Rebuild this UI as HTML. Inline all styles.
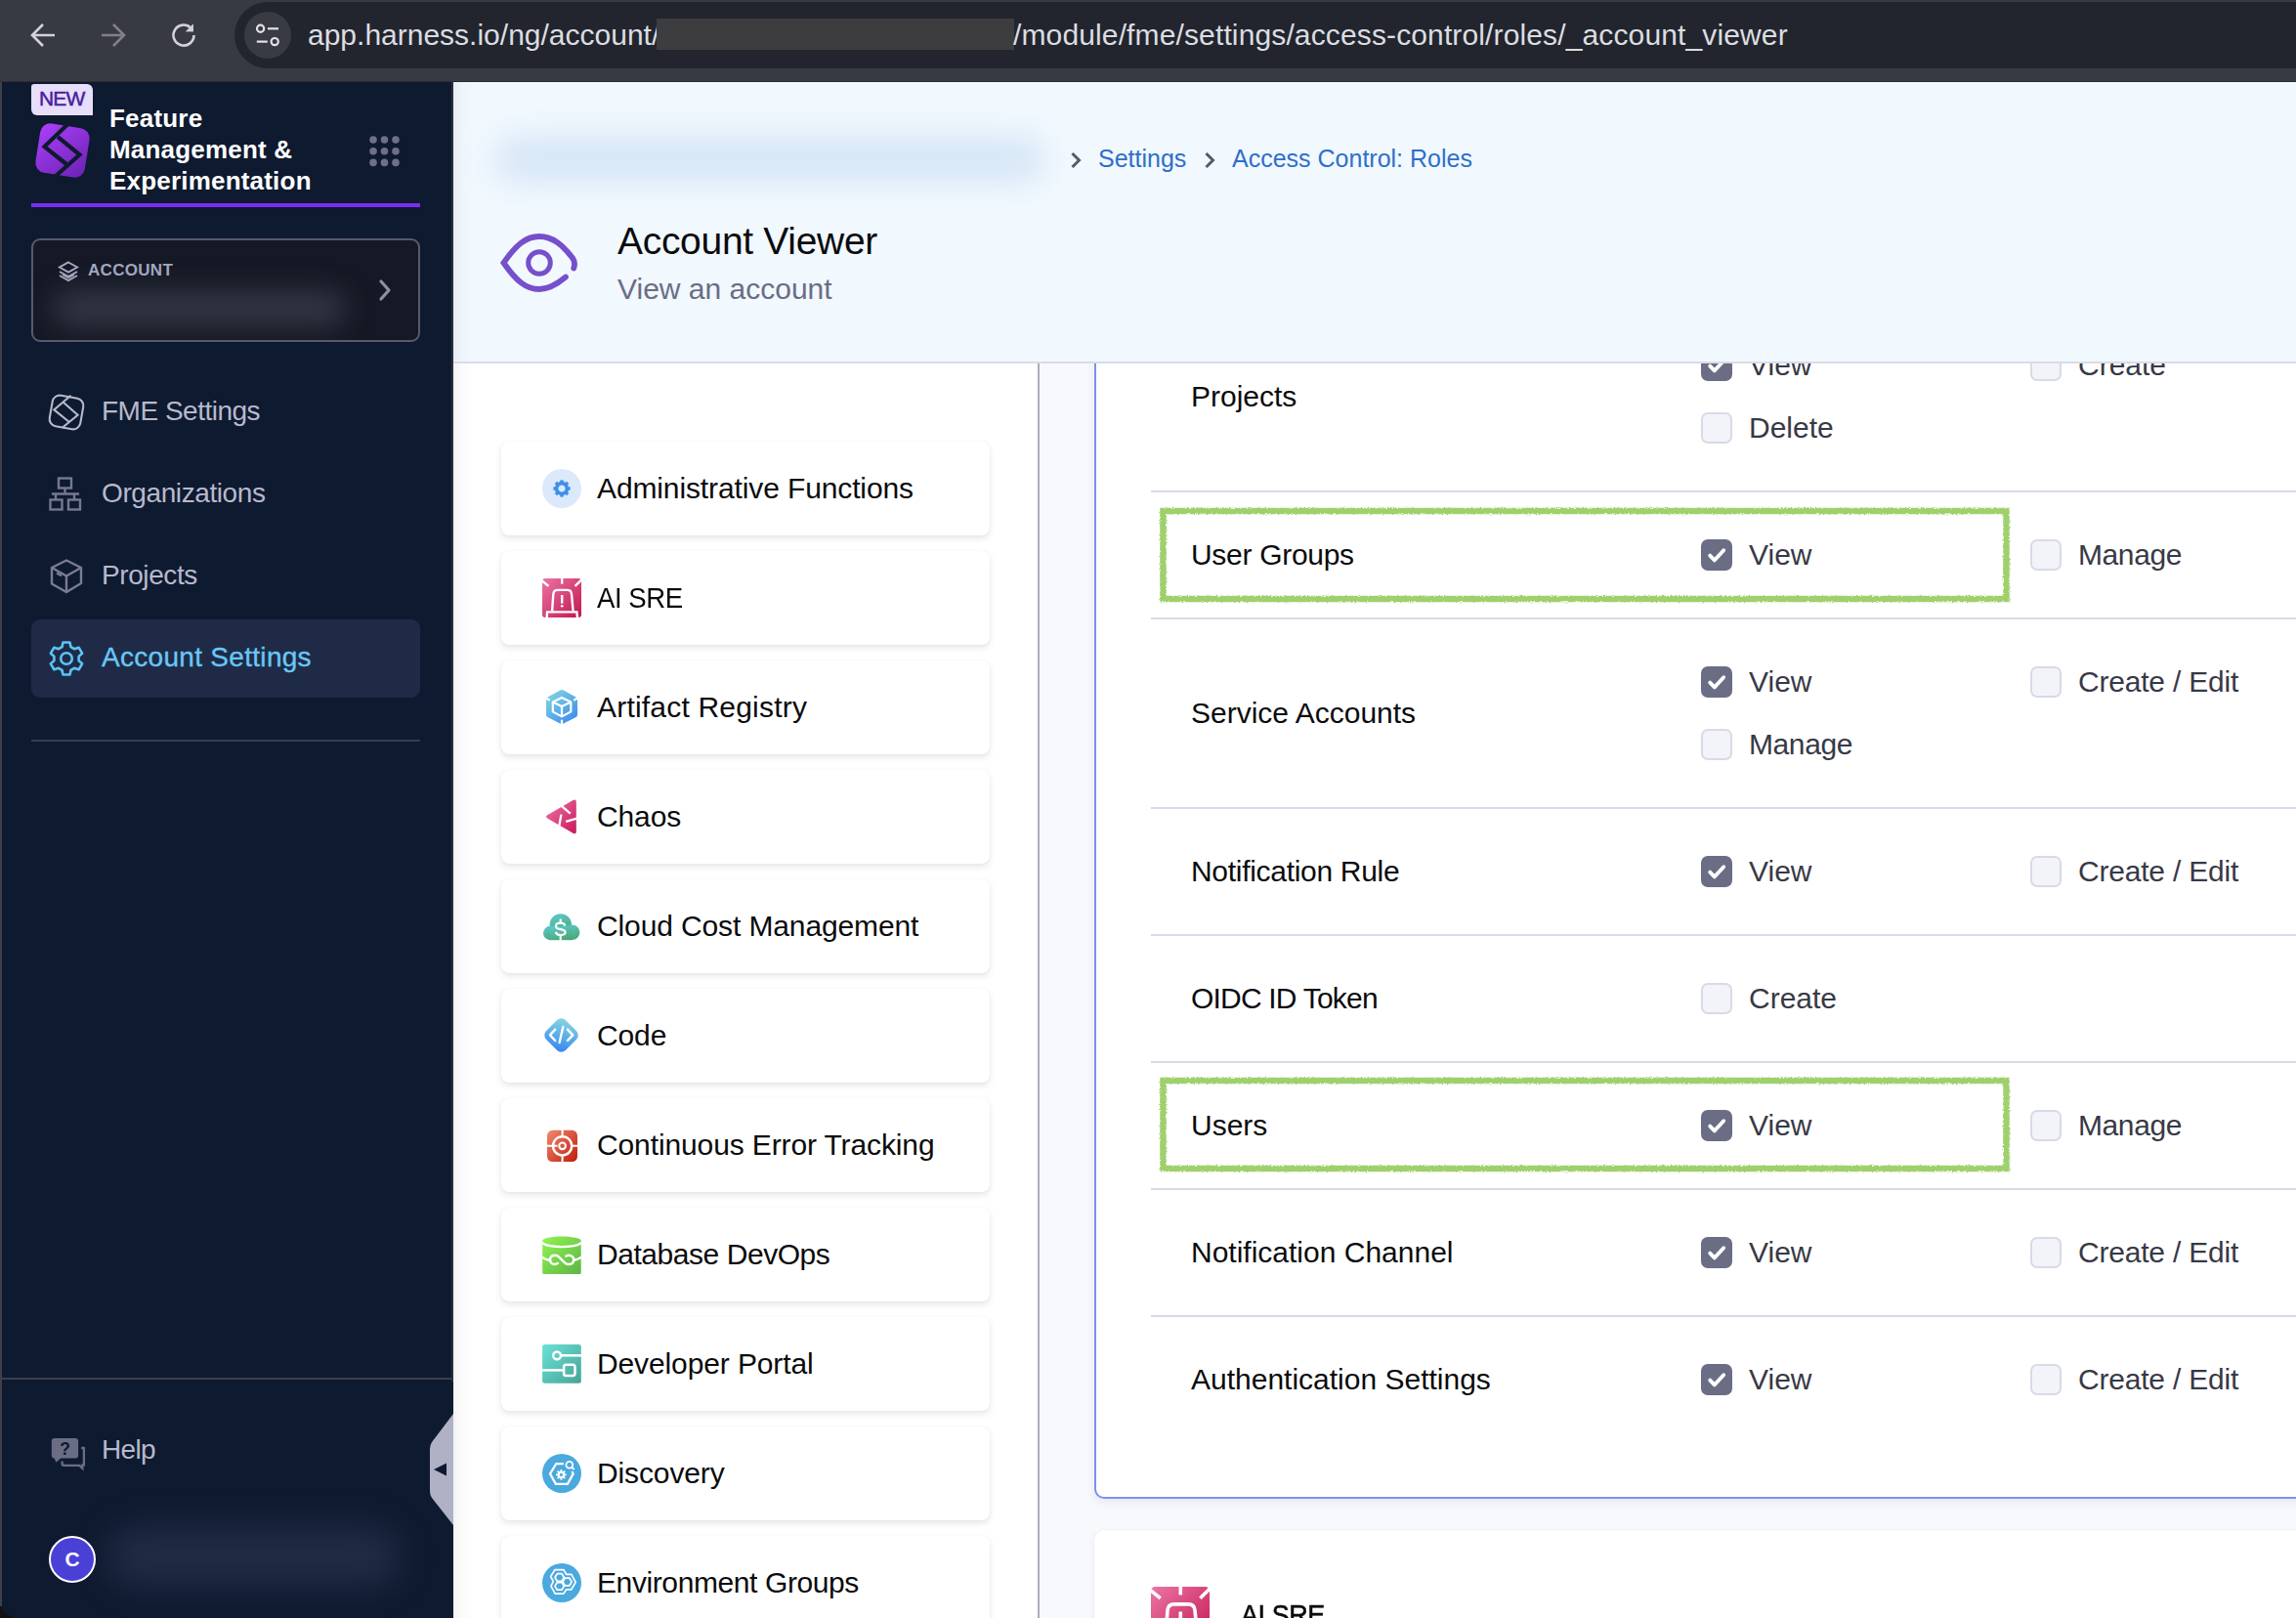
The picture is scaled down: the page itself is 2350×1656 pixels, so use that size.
<!DOCTYPE html>
<html><head><meta charset="utf-8">
<style>
*{box-sizing:border-box;margin:0;padding:0}
html,body{width:2350px;height:1656px;overflow:hidden;background:#f8f9fd;font-family:"Liberation Sans",sans-serif}
.a{position:absolute}
.t{position:absolute;white-space:nowrap;line-height:40px;height:40px}
#bar{left:0;top:0;width:2350px;height:84px;background:#383a43;border-bottom:1px solid #2b2c31}
#omni{left:240px;top:2px;width:2200px;height:68px;border-radius:34px;background:#22252e}
#site{left:250px;top:12px;width:48px;height:48px;border-radius:50%;background:#393b44}
#side{left:0;top:84px;width:464px;height:1572px;background:#0e1a2f;border-bottom-left-radius:18px;overflow:hidden}
#hdr{left:464px;top:84px;width:1886px;height:288px;background:#f1f8fe;border-bottom:2px solid #d9dbe8}
#lp{left:464px;top:372px;width:598px;height:1284px;background:#fff}
#div1{left:1062px;top:372px;width:2px;height:1284px;background:#abacba}
.card{position:absolute;left:513px;width:500px;height:96px;background:#fff;border-radius:8px;box-shadow:0 0 1px rgba(40,41,61,.10),0 3px 6px rgba(96,97,112,.16)}
.ct{position:absolute;left:98px;top:28px;font-size:30px;line-height:40px;color:#0b0b0d;white-space:nowrap;letter-spacing:-0.12px}
.ci{position:absolute;left:42px;top:28px;width:40px;height:40px}
#rc{left:1120px;top:300px;width:1300px;height:1234px;background:#fff;border:2px solid #7d90f2;border-radius:10px;box-shadow:0 4px 10px rgba(96,97,112,.10)}
.sep{position:absolute;left:1178px;width:1200px;height:2px;background:#d9dae6}
.lbl{position:absolute;left:1219px;font-size:30px;line-height:40px;height:40px;color:#0b0b0d;white-space:nowrap}
.cb{position:absolute;width:32px;height:32px;border-radius:7px}
.cb.on{background:#6b6d85}
.cb.off{background:#f3f3fa;border:2px solid #d9dae6}
.opt{position:absolute;font-size:30px;line-height:40px;height:40px;color:#383946;white-space:nowrap}
.green{position:absolute;border:6px solid #9fd36b}
</style></head><body>
<!-- browser bar -->
<div id="bar" class="a"></div>
<div id="omni" class="a"></div>
<div id="site" class="a"></div>
<svg class="a" style="left:30px;top:22px" width="28" height="28" viewBox="0 0 28 28" fill="none" stroke="#d2d3d9" stroke-width="2.6"><path d="M26 14H4M14 3L3 14l11 11"/></svg>
<svg class="a" style="left:102px;top:22px" width="28" height="28" viewBox="0 0 28 28" fill="none" stroke="#808187" stroke-width="2.6"><path d="M2 14h22M14 3l11 11-11 11"/></svg>
<svg class="a" style="left:174px;top:22px" width="28" height="28" viewBox="0 0 28 28" fill="none" stroke="#d2d3d9" stroke-width="2.6"><path d="M24.5 14A10.5 10.5 0 1 1 21.4 6.6"/><path d="M23.8 2.5v7.8h-7.8" fill="#cfd0d6" stroke="none"/><path d="M16.2 10.3h7.6V2.7z" fill="#cfd0d6" stroke="none"/></svg>
<svg class="a" style="left:256px;top:18px" width="36" height="36" viewBox="0 0 36 36" fill="none" stroke="#e3e3e6" stroke-width="2.2">
  <circle cx="10.6" cy="11.3" r="3.6"/><path d="M18 11.3h11"/>
  <circle cx="25.2" cy="24.6" r="3.6"/><path d="M6.8 24.6h11"/>
</svg>
<div class="t" style="left:315px;top:16px;font-size:30px;color:#dcdde0">app.harness.io/ng/account/</div>
<div class="a" style="left:672px;top:19px;width:366px;height:32px;background:#3d3d3f"></div>
<div class="t" style="left:1037px;top:16px;font-size:30px;color:#dcdde0;letter-spacing:0.13px">/module/fme/settings/access-control/roles/_account_viewer</div>

<!-- sidebar -->
<div class="a" style="left:0;top:1600px;width:40px;height:56px;background:#121212"></div>
<div id="side" class="a"></div>
<!-- sidebar content -->
<div class="a" style="left:0;top:84px;width:2px;height:1560px;background:#3d4049"></div>
<div class="a" style="left:32px;top:86px;width:63px;height:32px;background:#e6defb;border-radius:3px 6px 0 6px"></div>
<div class="t" style="left:40px;top:81px;font-size:21px;color:#4a1f9e;letter-spacing:-0.8px;-webkit-text-stroke:0.5px #4a1f9e">NEW</div>
<svg class="a" style="left:28px;top:118px" width="72" height="72" viewBox="0 0 72 72">
  <defs><linearGradient id="lg1" x1="0" y1="0" x2="1" y2="1"><stop offset="0" stop-color="#ab40fb"/><stop offset="1" stop-color="#6a22b3"/></linearGradient></defs>
  <rect x="10.5" y="10.5" width="51" height="51" rx="10.5" fill="url(#lg1)" transform="rotate(9 36 36)"/>
  <polyline points="42,8.5 17.5,32.1 40,50" fill="none" stroke="#0e1a2f" stroke-width="4.2" stroke-linejoin="miter"/>
  <polyline points="31.2,22.2 53.5,40.4 28,63" fill="none" stroke="#0e1a2f" stroke-width="4.2" stroke-linejoin="miter"/>
</svg>
<div class="t" style="left:112px;top:101px;font-size:26px;font-weight:700;color:#fff;letter-spacing:0.2px">Feature</div>
<div class="t" style="left:112px;top:133px;font-size:26px;font-weight:700;color:#fff;letter-spacing:0.2px">Management &amp;</div>
<div class="t" style="left:112px;top:165px;font-size:26px;font-weight:700;color:#fff;letter-spacing:0.2px">Experimentation</div>
<svg class="a" style="left:376px;top:137px" width="36" height="36" viewBox="0 0 36 36" fill="#6e7088">
  <circle cx="6" cy="6" r="3.8"/><circle cx="17.5" cy="6" r="3.8"/><circle cx="29" cy="6" r="3.8"/>
  <circle cx="6" cy="17.7" r="3.8"/><circle cx="17.5" cy="17.7" r="3.8"/><circle cx="29" cy="17.7" r="3.8"/>
  <circle cx="6" cy="29.4" r="3.8"/><circle cx="17.5" cy="29.4" r="3.8"/><circle cx="29" cy="29.4" r="3.8"/>
</svg>
<div class="a" style="left:32px;top:208px;width:398px;height:4px;background:#7a2df2"></div>

<!-- account box -->
<div class="a" style="left:32px;top:244px;width:398px;height:106px;background:#151925;border:2px solid #575a6b;border-radius:9px;overflow:hidden">
  <div class="a" style="left:20px;top:52px;width:300px;height:36px;background:#3a3c49;border-radius:18px;filter:blur(14px);opacity:.85"></div>
</div>
<svg class="a" style="left:58px;top:266px" width="24" height="24" viewBox="0 0 24 24" fill="none" stroke="#a3a6be" stroke-width="2">
  <path d="M12 2.5l9 5-9 5-9-5z" fill="none"/><path d="M3 12l9 5 9-5" /><path d="M3 16l9 5 9-5"/>
  <path d="M6 13.7l6 3.3 6-3.3v2.3l-6 3.3-6-3.3z" fill="#a3a6be" stroke="none"/>
</svg>
<div class="t" style="left:90px;top:257px;font-size:17px;font-weight:700;color:#a3a6be;letter-spacing:0.3px">ACCOUNT</div>
<svg class="a" style="left:384px;top:284px" width="20" height="26" viewBox="0 0 20 26"><path d="M6 4l8 9-8 9" fill="none" stroke="#8d8fa6" stroke-width="3.2" stroke-linecap="round" stroke-linejoin="round"/></svg>

<!-- nav -->
<svg class="a" style="left:44px;top:398px" width="48" height="48" viewBox="0 0 48 48" fill="none" stroke="#b8b9cc" stroke-width="2.1">
  <rect x="8" y="8" width="32" height="32" rx="7.5" transform="rotate(10 24 24)"/>
  <polyline points="28.5,6.7 11.3,21.4 27,34" stroke-linejoin="miter"/>
  <polyline points="20.8,13.7 35.6,26.7 19.5,40" stroke-linejoin="miter"/>
</svg>
<div class="t" style="left:104px;top:401px;font-size:28px;color:#b7b9cd;letter-spacing:-0.5px">FME Settings</div>
<svg class="a" style="left:48px;top:486px" width="40" height="40" viewBox="0 0 40 40" fill="none" stroke="#767890" stroke-width="2.4">
  <rect x="12" y="3.5" width="13" height="10"/><path d="M18.5 13.5v6M5 19.5h28M9 19.5v6M28 19.5v6"/>
  <rect x="3.5" y="25.5" width="12" height="10"/><rect x="22" y="25.5" width="12" height="10"/>
</svg>
<div class="t" style="left:104px;top:485px;font-size:28px;color:#b7b9cd;letter-spacing:-0.4px">Organizations</div>
<svg class="a" style="left:50px;top:571px" width="38" height="38" viewBox="0 0 38 38" fill="none" stroke="#7a7c92" stroke-width="2.4" stroke-linejoin="round">
  <path d="M18 2.5l15 7.5v16l-15 9-15-8.5v-16.5z"/><path d="M3 10l15 8.5 15-8.5M18 18.5v17"/><path d="M8 15.5l5 2.8"/>
</svg>
<div class="t" style="left:104px;top:569px;font-size:28px;color:#b7b9cd;letter-spacing:-0.4px">Projects</div>
<div class="a" style="left:32px;top:634px;width:398px;height:80px;background:#1f2b46;border-radius:9px"></div>
<svg class="a" style="left:48px;top:654px" width="40" height="40" viewBox="0 0 40 40">
  <g fill="none" stroke="#5ec3f7" stroke-width="2.6" stroke-linejoin="round">
  <path d="M16.5 3.5h7l1 4.6 3.6 2.1 4.5-1.5 3.5 6-3.5 3.2v4.2l3.5 3.2-3.5 6-4.5-1.5-3.6 2.1-1 4.6h-7l-1-4.6-3.6-2.1-4.5 1.5-3.5-6 3.5-3.2v-4.2l-3.5-3.2 3.5-6 4.5 1.5 3.6-2.1z"/>
  <circle cx="20" cy="20" r="5.8"/></g>
</svg>
<div class="t" style="left:104px;top:653px;font-size:28px;color:#69c7f6;letter-spacing:0.3px;-webkit-text-stroke:0.35px #69c7f6">Account Settings</div>
<div class="a" style="left:32px;top:757px;width:398px;height:2px;background:#383c4e"></div>

<!-- bottom -->
<div class="a" style="left:2px;top:1410px;width:461px;height:2px;background:#3b3f4e"></div>
<svg class="a" style="left:46px;top:1464px" width="50" height="46" viewBox="0 0 50 46">
  <path d="M9.8,8 H31.1 Q34.1,8 34.1,11 V25.4 Q34.1,28.4 31.1,28.4 H16.2 L11.4,32.7 L9.6,28.4 Q6.8,28.2 6.8,25.4 V11 Q6.8,8 9.8,8 Z" fill="#6b6d85"/>
  <path d="M37.2,18 H39.9 V35.4 H38.4 V38.8 L35.4,35.9 H19.6 Q17.6,35.9 17.6,34 V31.4" fill="none" stroke="#6b6d85" stroke-width="2.3"/>
  <text x="20.6" y="24.6" font-family="Liberation Sans" font-weight="700" font-size="17.5" fill="#0e1a2f" text-anchor="middle">?</text>
</svg>
<div class="t" style="left:104px;top:1464px;font-size:28px;color:#b7b9cd;letter-spacing:-0.7px">Help</div>
<div class="a" style="left:110px;top:1562px;width:300px;height:62px;background:#243049;border-radius:31px;filter:blur(16px);opacity:.8"></div>
<div class="a" style="left:50px;top:1572px;width:48px;height:48px;border-radius:50%;background:#4b40d6;border:2.5px solid #fff"></div>
<div class="t" style="left:50px;top:1576px;width:48px;text-align:center;font-size:21px;font-weight:700;color:#fff">C</div>
<svg class="a" style="left:438px;top:1446px" width="26" height="116" viewBox="0 0 26 116">
  <path d="M26,1 L4,30 Q2,33 2,37 V80 Q2,84 4,87 L26,115 Z" fill="#b0b1c5"/>
  <path d="M6,58 L19,51.5 V64.5 Z" fill="#0e1a2f"/>
</svg>


<!-- left panel -->
<div id="lp" class="a"></div>
<div id="div1" class="a"></div>
<div class="a" style="left:464px;top:84px;width:22px;height:1572px;background:linear-gradient(to right,rgba(30,30,50,.06),rgba(30,30,50,.02) 40%,rgba(30,30,50,0))"></div>
<div class="a" style="left:462px;top:84px;width:2px;height:1330px;background:#2c2e37"></div>
<div class="card" style="top:452px"><svg class="ci" viewBox="0 0 40 40"><circle cx="20" cy="20" r="20" fill="#dbe9fa"/>
<g fill="#3f8fe9" transform="translate(20 20)">
<circle r="5.4" fill="none" stroke="#3f8fe9" stroke-width="3.6"/>
<rect x="-1.7" y="-8.6" width="3.4" height="3.6"/><rect x="-1.7" y="-8.6" width="3.4" height="3.6" transform="rotate(45)"/>
<rect x="-1.7" y="-8.6" width="3.4" height="3.6" transform="rotate(90)"/><rect x="-1.7" y="-8.6" width="3.4" height="3.6" transform="rotate(135)"/>
<rect x="-1.7" y="-8.6" width="3.4" height="3.6" transform="rotate(180)"/><rect x="-1.7" y="-8.6" width="3.4" height="3.6" transform="rotate(225)"/>
<rect x="-1.7" y="-8.6" width="3.4" height="3.6" transform="rotate(270)"/><rect x="-1.7" y="-8.6" width="3.4" height="3.6" transform="rotate(315)"/>
</g></svg><div class="ct">Administrative Functions</div></div>
<div class="card" style="top:564px"><svg class="ci" viewBox="0 0 40 40"><defs><linearGradient id="gsre1" x1="0" y1="0" x2="1" y2="1"><stop offset="0" stop-color="#ec74a6"/><stop offset="1" stop-color="#c2174f"/></linearGradient></defs>
<rect x="0" y="0" width="40" height="40" rx="3" fill="url(#gsre1)"/>
<g fill="none" stroke="#fff" stroke-width="2.4">
<path d="M10.1,33.5 L11.3,16 Q11.7,11.9 15.8,11.9 H25.6 Q29.6,11.9 30,16 L31.6,33.5"/>
<path d="M4.6,40.5 L5.1,34.4 H35.4 L36,40.5"/>
<path d="M20.2,17 V25.6"/><path d="M20.2,0 V5.6"/><path d="M-0.5,2.2 L6.5,7.9"/><path d="M40.5,1 L33.6,7.8"/>
</g><circle cx="20.2" cy="28.2" r="1.3" fill="#fff"/></svg><div class="ct" style="letter-spacing:-0.5px;transform:scaleX(0.92);transform-origin:0 50%">AI SRE</div></div>
<div class="card" style="top:676px"><svg class="ci" viewBox="0 0 40 40"><defs><linearGradient id="gar" x1="0.1" y1="0" x2="0.9" y2="1"><stop offset="0" stop-color="#84d8e0"/><stop offset="1" stop-color="#3a88f0"/></linearGradient></defs>
<path d="M18.2,2.5 Q20,1.6 21.8,2.5 L34.5,9.4 Q36,10.2 36,12 V27.6 Q36,29.3 34.5,30.1 L21.8,36.5 Q20,37.4 18.2,36.5 L5.5,30.1 Q4,29.3 4,27.6 V12 Q4,10.2 5.5,9.4 Z" fill="url(#gar)"/>
<g fill="none" stroke="#fff" stroke-width="2.2" stroke-linejoin="round">
<path d="M20,9.9 L29.3,14.5 V24.4 L20,29.4 L10.8,24.4 V14.5 Z"/><path d="M10.8,14.5 L20,19 L29.3,14.5 M20,19 V29.4"/>
<path d="M3,10 L7.8,12.8 M32.2,12.8 L37,10 M20,32.8 V38"/></g></svg><div class="ct" style="letter-spacing:0.2px">Artifact Registry</div></div>
<div class="card" style="top:788px"><svg class="ci" viewBox="0 0 40 40"><defs><linearGradient id="gch" x1="0" y1="0" x2="1" y2="1"><stop offset="0" stop-color="#ee74a8"/><stop offset="1" stop-color="#c8195a"/></linearGradient></defs>
<path d="M31.5,3 Q34.8,1.5 34.8,5 V35 Q34.8,38.5 31.5,36.8 L5.2,21.5 Q2.6,19.8 5.2,18.3 Z" fill="url(#gch)"/>
<g fill="none" stroke="#fff" stroke-width="2.3"><path d="M19.7,8.8 L28.7,16.6"/><path d="M19.4,17.6 L17.3,29.5"/><path d="M24.2,24.8 L35.5,21.6"/></g></svg><div class="ct">Chaos</div></div>
<div class="card" style="top:900px"><svg class="ci" viewBox="0 0 40 40"><defs><linearGradient id="gcc" x1="0.3" y1="0" x2="0.7" y2="1"><stop offset="0" stop-color="#5ac8c8"/><stop offset="1" stop-color="#4aa774"/></linearGradient></defs>
<g fill="url(#gcc)"><circle cx="18.8" cy="18.5" r="11.2"/><circle cx="8.2" cy="27" r="7.2"/><circle cx="30.6" cy="26.2" r="7.8"/><rect x="8.2" y="20" width="22.4" height="14.2"/></g>
<g fill="none" stroke="#fff" stroke-width="2.2"><path d="M23.6,19.6 C22.5,17.5 20.5,16.7 18.7,16.7 C16,16.7 14,18 14,20 C14,22.5 17,22.8 19,23.2 C21.5,23.7 23.6,24.5 23.6,26.3 C23.6,28 21.5,29 18.7,29 C16,29 14.3,27.8 13.6,26"/><path d="M18.7,12.5 V16.7 M18.7,29 V34.5"/></g></svg><div class="ct">Cloud Cost Management</div></div>
<div class="card" style="top:1012px"><svg class="ci" viewBox="0 0 40 40"><defs><linearGradient id="gcd" x1="0.2" y1="0" x2="0.8" y2="1"><stop offset="0" stop-color="#84d6e4"/><stop offset="1" stop-color="#3a88f0"/></linearGradient></defs>
<rect x="5.4" y="5.4" width="28.2" height="28.2" rx="6.5" fill="url(#gcd)" transform="rotate(45 19.5 19.5)"/>
<g fill="none" stroke="#fff" stroke-width="2.4" stroke-linecap="round" stroke-linejoin="round"><path d="M13.2,13.6 L8,19.4 L13.2,25"/><path d="M25.9,13.6 L31.3,19.4 L25.9,25"/><path d="M21.3,10.9 L17.6,27"/></g></svg><div class="ct">Code</div></div>
<div class="card" style="top:1124px"><svg class="ci" viewBox="0 0 40 40"><defs><linearGradient id="gce" x1="0" y1="0" x2="1" y2="1"><stop offset="0" stop-color="#f08a70"/><stop offset="1" stop-color="#bf1d0c"/></linearGradient></defs>
<rect x="5" y="4.8" width="31" height="32.2" rx="5.5" fill="url(#gce)"/>
<g fill="none" stroke="#fff"><circle cx="20.6" cy="20.8" r="9.6" stroke-width="2.4"/><circle cx="20.6" cy="20.8" r="3.3" stroke-width="2.1"/>
<path d="M20.6,3.5 V11 M20.6,30.6 V38.5 M4,20.8 H11 M30.2,20.8 H37 M10,20.8 H15.5" stroke-width="2"/></g></svg><div class="ct">Continuous Error Tracking</div></div>
<div class="card" style="top:1236px"><svg class="ci" viewBox="0 0 40 40"><defs><linearGradient id="gdb" x1="0" y1="0" x2="1" y2="1"><stop offset="0" stop-color="#90f452"/><stop offset="1" stop-color="#5db545"/></linearGradient></defs>
<path d="M0.2,6 C0.2,0 39.7,0 39.7,6 V38.5 Q39.7,40 38,40 H2 Q0.2,40 0.2,38.5 Z" fill="url(#gdb)"/>
<g fill="none" stroke="#fff" stroke-width="2.4"><path d="M0,8 C6,13.5 33.5,13.5 40,8"/>
<path d="M0,22.8 C3,24.5 5.5,26 8,25.8"/><path d="M32.2,25.8 C35,26 37,24.5 40,22.8"/>
<path d="M16.6,28.3 C14,31.2 8.3,30.5 8,25.5 C7.8,20.8 13.8,19.3 17,22.3 L23,28.3 C25.6,31 31.7,30.6 32.2,25.8 C32.6,21 26.6,19.4 23.6,22.3"/></g></svg><div class="ct" style="letter-spacing:-0.45px">Database DevOps</div></div>
<div class="card" style="top:1348px"><svg class="ci" viewBox="0 0 40 40"><defs><linearGradient id="gdp" x1="0" y1="0" x2="1" y2="1"><stop offset="0" stop-color="#6ae2d8"/><stop offset="1" stop-color="#48a394"/></linearGradient></defs>
<rect x="0.1" y="0" width="39.7" height="39.7" rx="2.5" fill="url(#gdp)"/>
<g fill="none" stroke="#fff" stroke-width="2.5"><circle cx="15.1" cy="11.3" r="3.9"/><path d="M19,11.3 H40"/><rect x="22.1" y="20.7" width="11.4" height="11.4" rx="2.3"/><path d="M0,26.4 H22.1"/></g></svg><div class="ct">Developer Portal</div></div>
<div class="card" style="top:1460px"><svg class="ci" viewBox="0 0 40 40"><circle cx="20" cy="20" r="20" fill="#4aa9df"/>
<g fill="none" stroke="#fff" stroke-width="2.2" stroke-linejoin="round"><path d="M21.9,10.2 H14.2 L8,20.4 L13.9,30.9 H25.9 L31.7,20.4 L30.4,18"/>
<circle cx="27.8" cy="11.2" r="3.4" stroke-width="1.8"/><path d="M30.3,13.7 L32.6,16" stroke-width="1.8"/>
<circle cx="19.4" cy="21.4" r="2.7" stroke-width="2.2"/></g>
<g stroke="#fff" stroke-width="1.7" transform="translate(19.4 21.4)"><path d="M0,-5.4 V-3 M0,5.4 V3 M-5.4,0 H-3 M5.4,0 H3 M3.8,-3.8 L2.1,-2.1 M-3.8,3.8 L-2.1,2.1 M3.8,3.8 L2.1,2.1 M-3.8,-3.8 L-2.1,-2.1"/></g></svg><div class="ct">Discovery</div></div>
<div class="card" style="top:1572px"><svg class="ci" viewBox="0 0 40 40"><circle cx="20" cy="20" r="20" fill="#4aa9df"/>
<g fill="none" stroke="#fff" stroke-width="1.7" stroke-linejoin="round">
<path d="M12.9,6.7 H21.9 L24.7,11.3 H29.9 L34.2,19.4 L29.9,26.8 H24.7 L21.9,31.1 H13.2 L8.9,23.4 L11.4,18.7 L8.6,13.5 Z"/>
<path d="M15.3,10.7 H20 L22.3,14.5 L20,18.3 H15.3 L13,14.5 Z"/>
<path d="M15.3,19.6 H20 L22.3,23.4 L20,27.2 H15.3 L13,23.4 Z"/>
<path d="M23.2,15.2 H27.9 L30.2,19 L27.9,22.8 H23.2 L20.9,19 Z"/>
</g></svg><div class="ct" style="letter-spacing:-0.4px">Environment Groups</div></div>

<!-- right card -->
<div id="rc" class="a"></div>
<div class="a" style="left:1120px;top:1566px;width:1300px;height:200px;background:#fff;border-radius:10px;box-shadow:0 0 2px rgba(40,41,61,.06),0 2px 6px rgba(96,97,112,.08)"></div>
<svg class="a" style="left:1178px;top:1624px" width="60" height="60" viewBox="0 0 40 40"><defs><linearGradient id="gsre2" x1="0" y1="0" x2="1" y2="1"><stop offset="0" stop-color="#ec74a6"/><stop offset="1" stop-color="#c2174f"/></linearGradient></defs>
<rect x="0" y="0" width="40" height="40" rx="3" fill="url(#gsre2)"/>
<g fill="none" stroke="#fff" stroke-width="2.4">
<path d="M10.1,33.5 L11.3,16 Q11.7,11.9 15.8,11.9 H25.6 Q29.6,11.9 30,16 L31.6,33.5"/>
<path d="M4.6,40.5 L5.1,34.4 H35.4 L36,40.5"/>
<path d="M20.2,17 V25.6"/><path d="M20.2,0 V5.6"/><path d="M-0.5,2.2 L6.5,7.9"/><path d="M40.5,1 L33.6,7.8"/>
</g><circle cx="20.2" cy="28.2" r="1.3" fill="#fff"/></svg>
<div class="t" style="left:1270px;top:1633px;font-size:30px;color:#0b0b0d;-webkit-text-stroke:0.6px #0b0b0d;letter-spacing:-0.5px;transform:scaleX(0.9);transform-origin:0 50%">AI SRE</div>
<div class="sep" style="top:502px"></div>
<div class="sep" style="top:632px"></div>
<div class="sep" style="top:826px"></div>
<div class="sep" style="top:956px"></div>
<div class="sep" style="top:1086px"></div>
<div class="sep" style="top:1216px"></div>
<div class="sep" style="top:1346px"></div>
<div class="lbl" style="top:386px">Projects</div>
<div class="cb on" style="left:1741px;top:358px"><svg width="32" height="32" viewBox="0 0 32 32"><path d="M9.2 16.6l4.6 4.8 9.4-10.2" fill="none" stroke="#fff" stroke-width="3.8" stroke-linecap="round" stroke-linejoin="round"/></svg></div>
<div class="opt" style="left:1790px;top:354px">View</div>
<div class="cb off" style="left:2078px;top:358px"></div>
<div class="opt" style="left:2127px;top:354px">Create</div>
<div class="cb off" style="left:1741px;top:422px"></div>
<div class="opt" style="left:1790px;top:418px">Delete</div>
<div class="lbl" style="top:548px;letter-spacing:-0.3px">User Groups</div>
<div class="cb on" style="left:1741px;top:552px"><svg width="32" height="32" viewBox="0 0 32 32"><path d="M9.2 16.6l4.6 4.8 9.4-10.2" fill="none" stroke="#fff" stroke-width="3.8" stroke-linecap="round" stroke-linejoin="round"/></svg></div>
<div class="opt" style="left:1790px;top:548px">View</div>
<div class="cb off" style="left:2078px;top:552px"></div>
<div class="opt" style="left:2127px;top:548px;letter-spacing:-0.4px">Manage</div>
<div class="lbl" style="top:710px">Service Accounts</div>
<div class="cb on" style="left:1741px;top:682px"><svg width="32" height="32" viewBox="0 0 32 32"><path d="M9.2 16.6l4.6 4.8 9.4-10.2" fill="none" stroke="#fff" stroke-width="3.8" stroke-linecap="round" stroke-linejoin="round"/></svg></div>
<div class="opt" style="left:1790px;top:678px">View</div>
<div class="cb off" style="left:2078px;top:682px"></div>
<div class="opt" style="left:2127px;top:678px;letter-spacing:-0.2px">Create / Edit</div>
<div class="cb off" style="left:1741px;top:746px"></div>
<div class="opt" style="left:1790px;top:742px;letter-spacing:-0.4px">Manage</div>
<div class="lbl" style="top:872px;letter-spacing:-0.3px">Notification Rule</div>
<div class="cb on" style="left:1741px;top:876px"><svg width="32" height="32" viewBox="0 0 32 32"><path d="M9.2 16.6l4.6 4.8 9.4-10.2" fill="none" stroke="#fff" stroke-width="3.8" stroke-linecap="round" stroke-linejoin="round"/></svg></div>
<div class="opt" style="left:1790px;top:872px">View</div>
<div class="cb off" style="left:2078px;top:876px"></div>
<div class="opt" style="left:2127px;top:872px;letter-spacing:-0.2px">Create / Edit</div>
<div class="lbl" style="top:1002px;letter-spacing:-0.8px">OIDC ID Token</div>
<div class="cb off" style="left:1741px;top:1006px"></div>
<div class="opt" style="left:1790px;top:1002px">Create</div>
<div class="lbl" style="top:1132px">Users</div>
<div class="cb on" style="left:1741px;top:1136px"><svg width="32" height="32" viewBox="0 0 32 32"><path d="M9.2 16.6l4.6 4.8 9.4-10.2" fill="none" stroke="#fff" stroke-width="3.8" stroke-linecap="round" stroke-linejoin="round"/></svg></div>
<div class="opt" style="left:1790px;top:1132px">View</div>
<div class="cb off" style="left:2078px;top:1136px"></div>
<div class="opt" style="left:2127px;top:1132px;letter-spacing:-0.4px">Manage</div>
<div class="lbl" style="top:1262px">Notification Channel</div>
<div class="cb on" style="left:1741px;top:1266px"><svg width="32" height="32" viewBox="0 0 32 32"><path d="M9.2 16.6l4.6 4.8 9.4-10.2" fill="none" stroke="#fff" stroke-width="3.8" stroke-linecap="round" stroke-linejoin="round"/></svg></div>
<div class="opt" style="left:1790px;top:1262px">View</div>
<div class="cb off" style="left:2078px;top:1266px"></div>
<div class="opt" style="left:2127px;top:1262px;letter-spacing:-0.2px">Create / Edit</div>
<div class="lbl" style="top:1392px">Authentication Settings</div>
<div class="cb on" style="left:1741px;top:1396px"><svg width="32" height="32" viewBox="0 0 32 32"><path d="M9.2 16.6l4.6 4.8 9.4-10.2" fill="none" stroke="#fff" stroke-width="3.8" stroke-linecap="round" stroke-linejoin="round"/></svg></div>
<div class="opt" style="left:1790px;top:1392px">View</div>
<div class="cb off" style="left:2078px;top:1396px"></div>
<div class="opt" style="left:2127px;top:1392px;letter-spacing:-0.2px">Create / Edit</div>
<svg class="a" style="left:1180px;top:512px" width="884" height="112" viewBox="0 0 884 112"><defs><filter id="rough" x="-2%" y="-10%" width="104%" height="120%"><feTurbulence type="fractalNoise" baseFrequency="0.6" numOctaves="2" seed="3" result="n"/><feDisplacementMap in="SourceGraphic" in2="n" scale="3.2"/></filter></defs><rect x="10.5" y="11" width="863" height="90" fill="none" stroke="#9fd06c" stroke-width="6.5" filter="url(#rough)"/></svg>
<svg class="a" style="left:1180px;top:1095px" width="884" height="112" viewBox="0 0 884 112"><rect x="10.5" y="11" width="863" height="90" fill="none" stroke="#9fd06c" stroke-width="6.5" filter="url(#rough)"/></svg>
<!-- header -->
<div id="hdr" class="a"></div>
<div class="a" style="left:505px;top:138px;width:565px;height:50px;background:#d3e4f5;border-radius:25px;filter:blur(15px);opacity:.85"></div>
<svg class="a" style="left:1090px;top:152px" width="60" height="24" viewBox="0 0 60 24"><path d="M7.5 5l7 7-7 7" fill="none" stroke="#535c6b" stroke-width="3"/></svg>
<svg class="a" style="left:1227px;top:152px" width="24" height="24" viewBox="0 0 24 24"><path d="M7.5 5l7 7-7 7" fill="none" stroke="#535c6b" stroke-width="3"/></svg>
<svg class="a" style="left:500px;top:220px" width="110" height="100" viewBox="0 0 110 100" fill="none" stroke="#764fcb" stroke-width="5.8" stroke-linecap="round">
  <path d="M79,63.5 C70,71 62,76 52,76 C38,76 28,67 15.5,49 C28,31 38,22 52,22 C66,22 76,31 86,44 C88.5,47.5 88.5,51 87.2,54.5"/>
  <circle cx="52" cy="49" r="11.3" stroke-width="5"/>
</svg>
<div class="t" style="left:1124px;top:142px;font-size:25px;color:#2f6fc9">Settings</div>
<div class="t" style="left:1261px;top:142px;font-size:25px;color:#2f6fc9">Access Control: Roles</div>
<div class="t" style="left:632px;top:227px;font-size:39px;line-height:40px;color:#0b0b0d;letter-spacing:-0.3px">Account Viewer</div>
<div class="t" style="left:632px;top:276px;font-size:30px;color:#6b6d85">View an account</div>

<div class="a" style="left:464px;top:84px;width:22px;height:286px;background:linear-gradient(to right,rgba(30,30,50,.05),rgba(30,30,50,.015) 40%,rgba(30,30,50,0))"></div>
</body></html>
